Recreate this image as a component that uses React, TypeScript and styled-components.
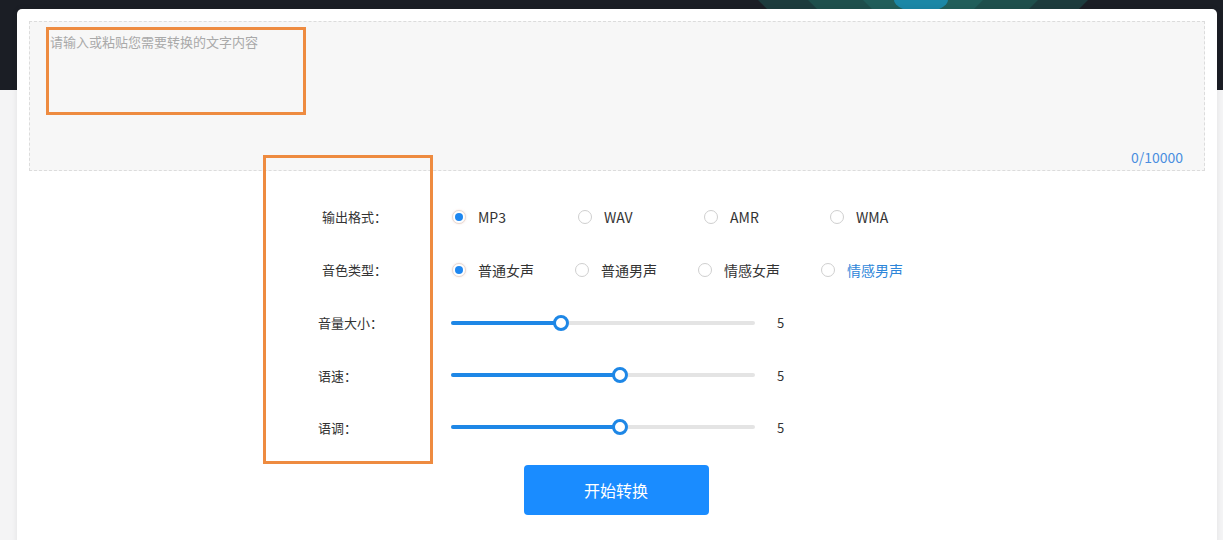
import React, { useState } from 'react';
import styled, { createGlobalStyle } from 'styled-components';

const GlobalStyle = createGlobalStyle`
  html, body {
    margin: 0;
    padding: 0;
    background: #f4f4f5;
    font-family: "Noto Sans CJK SC", "Noto Sans", "Liberation Sans", sans-serif;
    overflow: hidden;
  }
`;

interface Option {
  label: string;
  hover?: boolean;
}

const formats: Option[] = [{ label: 'MP3' }, { label: 'WAV' }, { label: 'AMR' }, { label: 'WMA' }];
const voices: Option[] = [
  { label: '普通女声' },
  { label: '普通男声' },
  { label: '情感女声' },
  { label: '情感男声', hover: true },
];

const sliders = [
  { label: '音量大小：', value: 5, percent: 36.2 },
  { label: '语速：', value: 5, percent: 55.6 },
  { label: '语调：', value: 5, percent: 55.6 },
];

const App: React.FC = () => {
  const [text, setText] = useState('');
  const [format, setFormat] = useState(0);
  const [voice, setVoice] = useState(0);

  return (
    <>
      <GlobalStyle />
      <Page>
        <Header>
          <Decoration width="330" height="90" viewBox="0 0 330 90">
            <polygon points="0,0 330,0 290,40 40,40" fill="#1d3b3d" />
            <polygon points="50,0 280,0 240,40 90,40" fill="#1f4f4c" />
            <polygon points="105,0 225,0 195,30 135,30" fill="#215e5a" />
            <ellipse cx="163" cy="0" rx="27" ry="12" fill="#1b87a6" />
          </Decoration>
        </Header>
        <Card>
          <TextBox>
            <TextArea
              placeholder="请输入或粘贴您需要转换的文字内容"
              value={text}
              maxLength={10000}
              onChange={(e) => setText(e.target.value)}
            />
            <Counter>{text.length}/10000</Counter>
          </TextBox>

          <Form>
            <Row>
              <Label>输出格式：</Label>
              <Options>
                {formats.map((o, i) => (
                  <RadioItem key={o.label} $width={126} onClick={() => setFormat(i)}>
                    <Radio $checked={format === i} />
                    <OptionText $hover={o.hover}>{o.label}</OptionText>
                  </RadioItem>
                ))}
              </Options>
            </Row>
            <Row>
              <Label>音色类型：</Label>
              <Options>
                {voices.map((o, i) => (
                  <RadioItem key={o.label} $width={123} onClick={() => setVoice(i)}>
                    <Radio $checked={voice === i} />
                    <OptionText $hover={o.hover}>{o.label}</OptionText>
                  </RadioItem>
                ))}
              </Options>
            </Row>
            {sliders.map((s) => (
              <Row key={s.label}>
                <Label $shift>{s.label}</Label>
                <Slider>
                  <Fill style={{ width: `${s.percent}%` }} />
                  <Thumb style={{ left: `${s.percent}%` }} />
                </Slider>
                <Value>{s.value}</Value>
              </Row>
            ))}
          </Form>

          <ButtonRow>
            <ConvertButton>开始转换</ConvertButton>
          </ButtonRow>

          <Annotation $left={29} $top={18} $width={260} $height={88} />
          <Annotation $left={246} $top={146} $width={170} $height={309} />
        </Card>
      </Page>
    </>
  );
};

const Page = styled.div`
  width: 1223px;
  height: 540px;
  overflow: hidden;
`;

const Header = styled.div`
  height: 90px;
  background: #1b1e25;
  position: relative;
  overflow: hidden;
`;

const Decoration = styled.svg`
  position: absolute;
  left: 758px;
  top: 0;
`;

const Card = styled.div`
  position: relative;
  margin: -81px 0 0 17px;
  width: 1200px;
  height: 560px;
  box-sizing: border-box;
  padding: 12px;
  background: #fff;
  border-radius: 5px;
  box-shadow: 0 0 6px rgba(0, 0, 0, 0.08);
`;

const TextBox = styled.div`
  position: relative;
  height: 150px;
  background: #f7f7f7;
  border: 1px dashed #dcdcdc;
  box-sizing: border-box;
`;

const TextArea = styled.textarea`
  width: 100%;
  height: 100%;
  box-sizing: border-box;
  border: none;
  outline: none;
  resize: none;
  background: transparent;
  padding: 10px 20px;
  font-family: "Noto Sans CJK SC", sans-serif;
  font-size: 13px;
  color: #333;

  &::placeholder {
    color: #a9a9a9;
  }
`;

const Counter = styled.span`
  position: absolute;
  right: 21px;
  bottom: 3px;
  font-size: 14px;
  color: #4a8ee0;
`;

const Form = styled.div`
  margin: 19px 0 0 289px;
  display: flex;
  flex-direction: column;
`;

const Row = styled.div`
  height: 53px;
  display: flex;
  align-items: center;

  &:nth-child(n + 4) {
    height: 52px;
  }
`;

const Label = styled.div<{ $shift?: boolean }>`
  width: 133px;
  box-sizing: border-box;
  padding-left: ${(p) => (p.$shift ? 0 : 4)}px;
  font-size: 13px;
  color: #333;
`;

const Options = styled.div`
  display: flex;
  align-items: center;
`;

const RadioItem = styled.label<{ $width: number }>`
  width: ${(p) => p.$width}px;
  display: flex;
  align-items: center;
  cursor: pointer;
`;

const Radio = styled.span<{ $checked: boolean }>`
  width: 14px;
  height: 14px;
  box-sizing: border-box;
  border-radius: 50%;
  border: 1px solid ${(p) => (p.$checked ? '#e6d9d4' : '#cfcfcf')};
  background: #fff;
  margin: 0 12px 0 1px;
  position: relative;
  box-shadow: ${(p) => (p.$checked ? '0 0 2px rgba(220, 160, 140, 0.35)' : 'none')};

  &::after {
    content: '';
    display: ${(p) => (p.$checked ? 'block' : 'none')};
    position: absolute;
    left: 2px;
    top: 2px;
    width: 8px;
    height: 8px;
    border-radius: 50%;
    background: #1e87f0;
  }
`;

const OptionText = styled.span<{ $hover?: boolean }>`
  font-size: 14px;
  color: ${(p) => (p.$hover ? '#2d86d9' : '#333')};
`;

const Slider = styled.div`
  position: relative;
  width: 304px;
  height: 4px;
  border-radius: 2px;
  background: #e4e4e4;
`;

const Fill = styled.div`
  height: 100%;
  border-radius: 2px;
  background: #1e87e6;
`;

const Thumb = styled.span`
  position: absolute;
  top: 50%;
  width: 16px;
  height: 16px;
  box-sizing: border-box;
  border: 3px solid #1e87e6;
  border-radius: 50%;
  background: #fff;
  transform: translate(-50%, -50%);
`;

const Value = styled.span`
  margin-left: 22px;
  font-size: 13px;
  color: #333;
`;

const ButtonRow = styled.div`
  display: flex;
  justify-content: center;
  margin-top: 12px;
  padding-right: 2px;
`;

const ConvertButton = styled.button`
  width: 185px;
  height: 50px;
  border: none;
  border-radius: 4px;
  background: #1a8cff;
  color: #fff;
  font-family: "Noto Sans CJK SC", sans-serif;
  font-size: 16px;
  cursor: pointer;
`;

const Annotation = styled.div<{ $left: number; $top: number; $width: number; $height: number }>`
  position: absolute;
  left: ${(p) => p.$left}px;
  top: ${(p) => p.$top}px;
  width: ${(p) => p.$width}px;
  height: ${(p) => p.$height}px;
  box-sizing: border-box;
  border: 3px solid #ee8b40;
  pointer-events: none;
`;

export default App;
